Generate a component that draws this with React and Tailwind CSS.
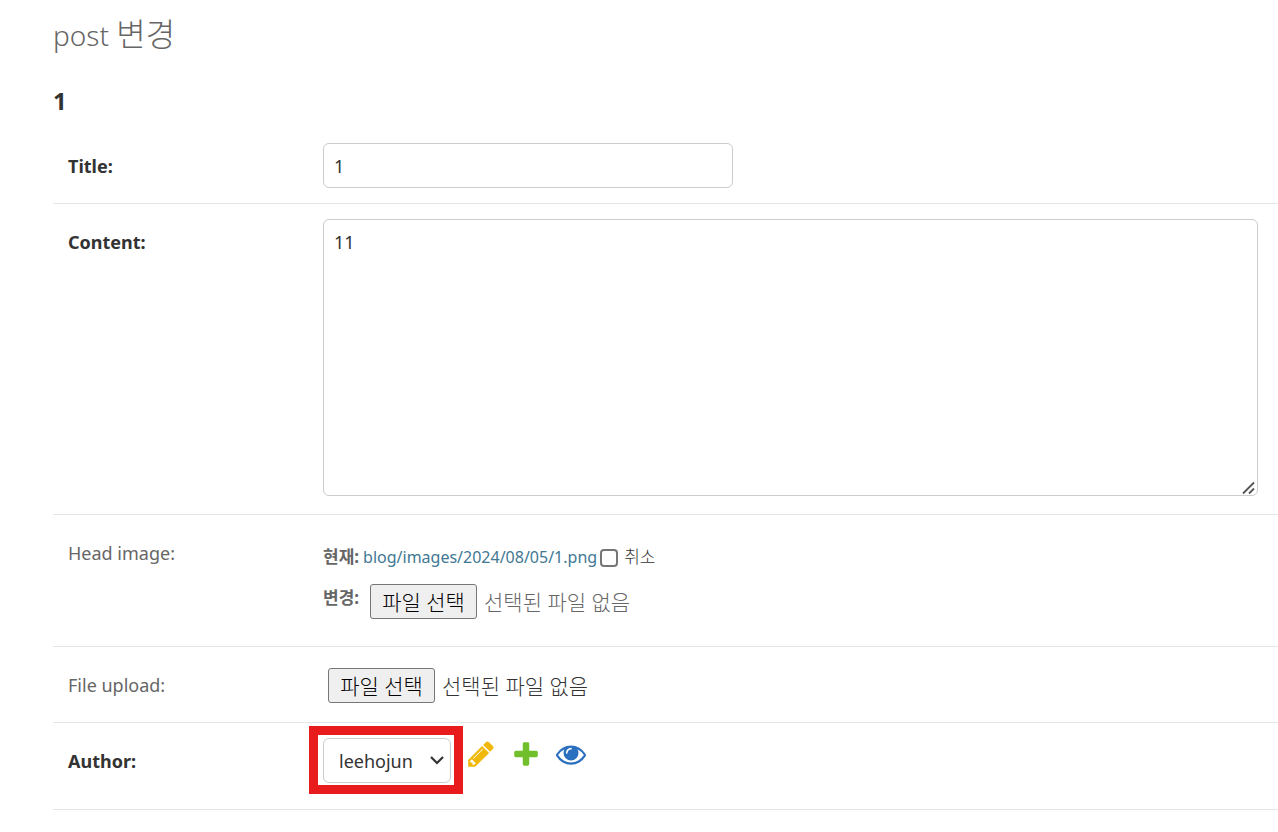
import { useRef } from "react";

function Row({ label, htmlFor, bold, className = "", children }) {
  return (
    <div className={`flex border-b border-[#e5e5e5] pl-[15px] pr-5 ${className}`}>
      <div className="w-[255px] shrink-0 pt-[9px]">
        <label htmlFor={htmlFor} className={bold ? "font-bold text-[#333]" : "text-[#666]"}>
          {label}
        </label>
      </div>
      <div className="min-w-0 flex-1">{children}</div>
    </div>
  );
}

function FilePicker({ id, className = "" }) {
  const input = useRef(null);
  return (
    <div className={`flex items-center gap-[7px] text-[21px] leading-7 ${className}`}>
      <input ref={input} id={id} type="file" tabIndex={-1} className="sr-only" />
      <button
        type="button"
        onClick={() => input.current.click()}
        className="h-[35px] w-[107px] rounded-[3px] border border-[#767676] bg-[#efefef] font-light whitespace-nowrap text-black"
      >
        파일 선택
      </button>
      <span className="font-light">선택된 파일 없음</span>
    </div>
  );
}

function LinkIcon({ label, color, d }) {
  return (
    <a href="#" aria-label={label} className={color}>
      <svg viewBox="0 0 1792 1792" className="size-[30px]" fill="currentColor" aria-hidden="true">
        <path d={d} />
      </svg>
    </a>
  );
}

const PENCIL =
  "M491 1536l91-91-235-235-91 91v107h128v128h107zm523-928q0-22-22-22-10 0-17 7l-542 542q-7 7-7 17 0 22 22 22 10 0 17-7l542-542q7-7 7-17zm-54-192l416 416-832 832h-416v-416zm683 96q0 53-37 90l-166 166-416-416 166-165q36-38 90-38 53 0 91 38l235 234q37 39 37 91z";
const PLUS =
  "M1600 796v192q0 40-28 68t-68 28h-416v416q0 40-28 68t-68 28h-192q-40 0-68-28t-28-68v-416h-416q-40 0-68-28t-28-68v-192q0-40 28-68t68-28h416v-416q0-40 28-68t68-28h192q40 0 68 28t28 68v416h416q40 0 68 28t28 68z";
const EYE =
  "M1664 960q-152-236-381-353 61 104 61 225 0 185-131.5 316.5t-316.5 131.5-316.5-131.5-131.5-316.5q0-121 61-225-229 117-381 353 133 205 333.5 326.5t434.5 121.5 434.5-121.5 333.5-326.5zm-720-384q0-20-14-34t-34-14q-125 0-214.5 89.5t-89.5 214.5q0 20 14 34t34 14 34-14 14-34q0-86 61-147t147-61q20 0 34-14t14-34zm848 384q0 34-20 69-140 230-376.5 368.5t-499.5 138.5-499.5-139-376.5-368q-20-35-20-69t20-69q140-229 376.5-368t499.5-139 499.5 139 376.5 368q20 35 20 69z";

export default function App() {
  return (
    <main className="min-h-screen bg-white pl-[53px] font-['Noto_Sans','Noto_Sans_CJK_KR',sans-serif] text-lg leading-7 text-[#333]">
      <h1 className="pt-[14px] text-[28px] leading-10 font-light text-[#666]">
        post <span className="text-[32px]">변경</span>
      </h1>
      <h2 className="pt-8 text-2xl leading-7 font-bold">1</h2>

      <form className="pt-[13px]">
        <Row label="Title:" htmlFor="title" bold className="py-[15px]">
          <input
            id="title"
            type="text"
            defaultValue="1"
            className="block h-[45px] w-[410px] rounded-md border border-[#ccc] px-[10px]"
          />
        </Row>

        <Row label="Content:" htmlFor="content" bold className="pt-[15px] pb-[18px]">
          <div className="relative">
            <textarea
              id="content"
              defaultValue="11"
              className="block h-[277px] w-full resize-none rounded-md border border-[#ccc] px-[10px] py-2"
            />
            <svg
              className="pointer-events-none absolute right-[2px] bottom-[1px] size-[14px]"
              viewBox="0 0 14 14"
              fill="none"
              stroke="#555"
              strokeWidth="1.8"
              aria-hidden="true"
            >
              <path d="M1 12.500L12 1.500M7 12.500L12 7.500" />
            </svg>
          </div>
        </Row>

        <Row label="Head image:" htmlFor="head-image" className="pt-[15px] pb-[27px]">
          <div className="pt-[13px] text-base leading-7 text-[#666]">
            <div className="flex items-center">
              <span className="pr-1 text-[17px] font-bold">현재:</span>
              <a href="#" className="text-[#417893]">
                blog/images/2024/08/05/1.png
              </a>
              <span className="flex items-center gap-[6px] pl-[3px] text-[17px] text-[#333]">
                <input
                  id="clear"
                  type="checkbox"
                  className="mt-px size-[18px] appearance-none rounded-[4px] border-2 border-[#767676] bg-white"
                />
                <label htmlFor="clear" className="font-light">
                  취소
                </label>
              </span>
            </div>
            <div className="flex items-start pt-[13px]">
              <span className="w-[47px] text-[17px] font-bold">변경:</span>
              <FilePicker id="head-image" />
            </div>
          </div>
        </Row>

        <Row label="File upload:" htmlFor="file-upload" className="pt-[15px] pb-[19px]">
          <FilePicker id="file-upload" className="pt-[6px] pl-[5px]" />
        </Row>

        <Row label="Author:" htmlFor="author" bold className="pt-[15px] pb-[26px]">
          <div className="flex items-start gap-[15px]">
            <div className="relative">
              <select
                id="author"
                className="block h-[45px] w-[128px] appearance-none rounded-md border border-[#ccc] bg-white pt-px pl-[15px]"
              >
                <option>leehojun</option>
              </select>
              <svg
                className="pointer-events-none absolute top-[17px] right-[7px] h-[10px] w-[14px]"
                viewBox="0 0 14 10"
                fill="none"
                stroke="#333"
                strokeWidth="2.2"
                aria-hidden="true"
              >
                <path d="M1 2L7 8L13 2" />
              </svg>
              <div className="pointer-events-none absolute -top-3 -right-3 -bottom-[11px] -left-[14px] border-[9px] border-[#e81c1c]" />
            </div>
            <div className="flex gap-[15px] pt-px">
              <LinkIcon label="Change author" color="text-[#efb80b]" d={PENCIL} />
              <LinkIcon label="Add author" color="text-[#70bf2b]" d={PLUS} />
              <LinkIcon label="View author" color="text-[#2b70bf]" d={EYE} />
            </div>
          </div>
        </Row>
      </form>
    </main>
  );
}
